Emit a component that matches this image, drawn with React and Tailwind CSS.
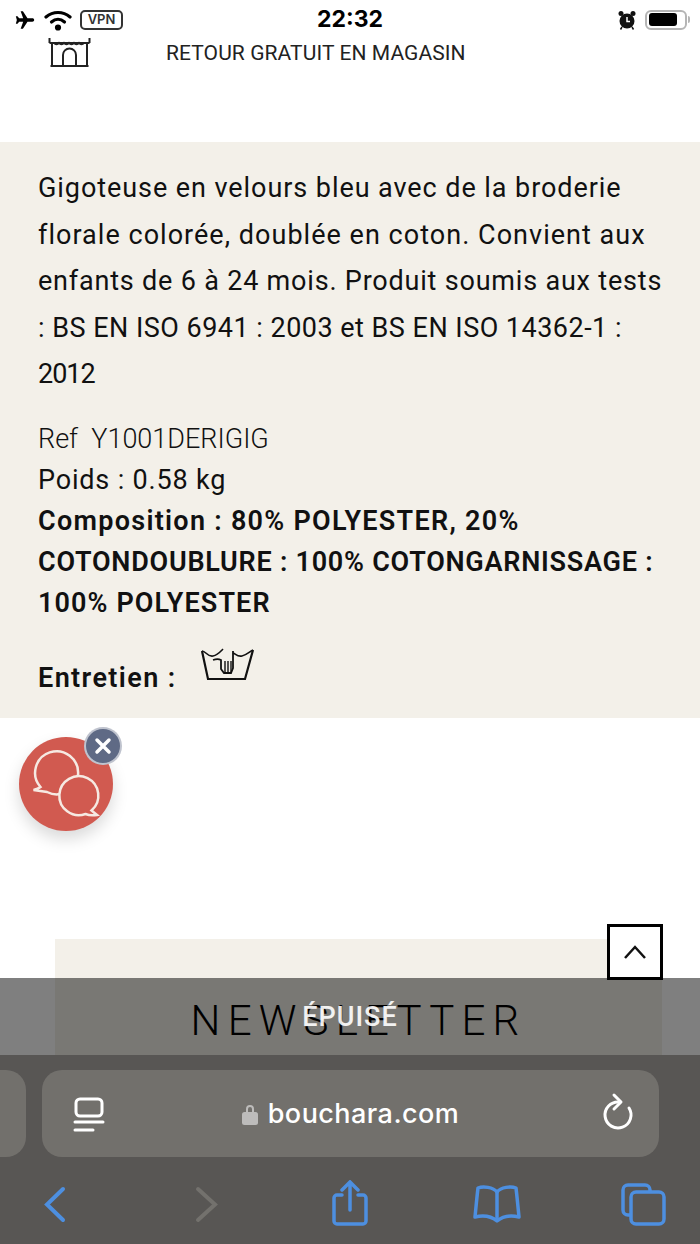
import React from 'react';

function StatusBar() {
  return (
    <div className="h-[34px] pt-[5px] flex items-center justify-between pl-[14px] pr-[10px] font-['Inter',sans-serif] text-black relative">
      <div className="flex items-center gap-[8px]">
        <svg width="22" height="20" viewBox="0 0 24 24" fill="currentColor">
          <path d="M23 12c0-1.200-1-2-2.200-2H15L9.500 1.500H6.800l3 8.500H5L3 7.500H1L2.200 12 1 16.500h2L5 14h4.800l-3 8.500h2.700L15 14h5.800c1.200 0 2.200-.8 2.200-2z" />
        </svg>
        <svg width="28" height="22" viewBox="0 0 28 22" fill="none" stroke="currentColor" strokeWidth="3.200" strokeLinecap="round">
          <path d="M2 8c7-6 17-6 24 0" />
          <path d="M7.500 13c4-3.500 9-3.500 13 0" />
          <circle cx="14" cy="18.500" r="1.500" fill="currentColor" />
        </svg>
        <div className="w-[43px] h-[20px] border-2 border-[#333] rounded-[5px] flex items-center justify-center text-[13px] leading-none font-semibold text-[#333]">VPN</div>
      </div>
      <div className="absolute left-[317px] top-[5px] text-[23px] leading-[28px] font-bold">22:32</div>
      <div className="flex items-center gap-[8px]">
        <svg width="20" height="22" viewBox="0 0 20 22">
          <circle cx="10" cy="12" r="7.500" fill="#111" />
          <circle cx="4" cy="4.500" r="2.500" fill="#111" />
          <circle cx="16" cy="4.500" r="2.500" fill="#111" />
          <path d="M10 8v4.500h3" stroke="#fff" strokeWidth="1.500" fill="none" />
          <path d="M5 18l-1.500 2.500M15 18l1.500 2.500" stroke="#111" strokeWidth="1.500" />
        </svg>
        <div className="flex items-center gap-[1px]">
          <div className="w-[42px] h-[20px] border-2 border-[#b5b5b5] rounded-[6px] p-[1.500px]">
            <div className="w-[28px] h-full bg-black rounded-[3px]" />
          </div>
          <div className="w-[2px] h-[7px] bg-[#b5b5b5] rounded-r" />
        </div>
      </div>
    </div>
  );
}

export default function App() {
  return (
    <div className="w-[700px] h-[1244px] relative overflow-hidden bg-white font-['Roboto',sans-serif]">
      <StatusBar />
      <div className="flex items-start h-[108px] text-[#222]">
        <svg className="ml-[48px] mt-[3px]" width="43" height="31" viewBox="0 0 43 31" fill="none" stroke="#222" strokeWidth="2">
          <path d="M1.500 1v5M41.500 1v5M1.500 6h40" />
          <path d="M6 6a2.800 2.800 0 0 0 5 0a2.800 2.800 0 0 0 5 0a2.800 2.800 0 0 0 5 0a2.800 2.800 0 0 0 5 0a2.800 2.800 0 0 0 5 0a2.800 2.800 0 0 0 5 0" strokeWidth="1.500" />
          <path d="M4 7v22h35V7M2.500 29h38" />
          <path d="M15 29V18a6.500 6.500 0 0 1 13 0v11" />
        </svg>
        <div className="ml-[75px] mt-[6px] text-[21px] leading-[26px] tracking-[0.09px]">RETOUR GRATUIT EN MAGASIN</div>
      </div>

      <div className="h-[576px] bg-[#f3f0e9] px-[38px] pt-[23px] text-[#111]">
        <div className="text-[27px] leading-[46.500px] whitespace-nowrap">
          <div className="tracking-[0.93px]">Gigoteuse en velours bleu avec de la broderie</div>
          <div className="tracking-[1.03px]">florale colorée, doublée en coton. Convient aux</div>
          <div className="tracking-[0.8px]">enfants de 6 à 24 mois. Produit soumis aux tests</div>
          <div className="tracking-[0.48px]">: BS EN ISO 6941 : 2003 et BS EN ISO 14362-1 :</div>
          <div className="tracking-[-1px]">2012</div>
        </div>
        <div className="mt-[21px] text-[27px] leading-[41px] whitespace-nowrap">
          <div className="font-light whitespace-pre">Ref  Y1001DERIGIG</div>
          <div className="tracking-[0.83px]">Poids : 0.58 kg</div>
          <div className="font-semibold tracking-[1.28px]">Composition : 80% POLYESTER, 20%</div>
          <div className="font-semibold tracking-[0.75px]">COTONDOUBLURE : 100% COTONGARNISSAGE :</div>
          <div className="font-semibold tracking-[1.1px]">100% POLYESTER</div>
        </div>
        <div className="mt-[30px] flex items-start">
          <span className="text-[27px] leading-[36px] font-semibold mt-[6px] tracking-[1.4px]">Entretien :</span>
          <svg className="ml-[23px] mt-[-8px]" width="54" height="36" viewBox="0 0 54 36" fill="none" stroke="#111" strokeWidth="2.200">
            <path d="M2 5l6 28h37l8-29" />
            <path d="M2 5c4 0 5 6 11 5 5-1 7-4 10-7M33 7c3 1 4 4 9 3 5-1 7-4 11-6" strokeWidth="1.600" />
            <path d="M13 14c3-1 6-1 8 0v9l3 4h7l2-5V5" strokeWidth="1.800" />
            <path d="M25 15v11M28 15v11M31 15v11" strokeWidth="1.400" />
          </svg>
        </div>
      </div>

      <div className="mt-[221px] ml-[55px] w-[607px] h-[116px] bg-[#f3f0e9] flex items-end justify-center pb-[11px]">
        <div className="text-[42px] leading-[46px] font-light tracking-[7.200px] text-black">NEWSLETTER</div>
      </div>

      {/* floating chat button */}
      <div className="absolute left-[19px] top-[737px] w-[94px] h-[94px] rounded-full bg-[#d15a50] shadow-[0_8px_16px_rgba(0,0,0,0.15)]">
        <svg width="94" height="94" viewBox="0 0 94 94" fill="none" stroke="#f6e9e2" strokeWidth="2.500">
          <path d="M21.500 50A21.500 21.500 0 1 1 28 55L14.500 53Q19 52 21.500 50z" />
          <path d="M66.500 77A19.500 19.500 0 1 1 72.500 73.500L78 78Q71 79 66.500 77z" fill="#d15a50" />
        </svg>
      </div>
      <div className="absolute left-[84px] top-[727px] w-[38px] h-[38px] rounded-full bg-[#5f6a85] border-2 border-white/60 flex items-center justify-center">
        <svg width="20" height="20" viewBox="0 0 20 20" stroke="#fff" strokeWidth="3.500" strokeLinecap="round">
          <path d="M4 4l12 12M16 4L4 16" />
        </svg>
      </div>

      {/* scroll to top */}
      <div className="absolute left-[607px] top-[924px] w-[56px] h-[56px] border-[3px] border-black bg-white flex items-center justify-center z-10">
        <svg width="26" height="16" viewBox="0 0 26 16" fill="none" stroke="#111" strokeWidth="2.500">
          <path d="M3 14L13 3l10 11" />
        </svg>
      </div>

      {/* sold out bar */}
      <div className="absolute left-0 right-0 top-[978px] h-[77px] bg-black/50 flex items-start justify-center pt-[21px] z-20">
        <span className="text-[27px] leading-[36px] text-white/90 font-medium tracking-[1px]">ÉPUISÉ</span>
      </div>

      {/* safari toolbar */}
      <div className="absolute left-0 right-0 bottom-0 h-[189px] bg-[#585654] z-30">
        <div className="absolute left-[-40px] top-[15px] w-[66px] h-[87px] rounded-[20px] bg-[#72706c]" />
        <div className="ml-[42px] mt-[15px] w-[617px] h-[87px] rounded-[20px] bg-[#72706c] relative flex items-center justify-center">
          <svg className="absolute left-[31px] top-[27px]" width="32" height="36" viewBox="0 0 32 36" fill="none" stroke="#fff" strokeWidth="3" strokeLinecap="round">
            <rect x="3" y="2" width="26" height="17" rx="4" />
            <path d="M2 25h28M2 33h18" />
          </svg>
          <svg className="mr-[10px]" width="16" height="22" viewBox="0 0 16 22" fill="#bdbcbb">
            <path d="M4 9V6a4 4 0 0 1 8 0v3h-2V6a2 2 0 0 0-4 0v3z" />
            <rect x="0" y="9" width="16" height="13" rx="2.500" />
          </svg>
          <span className="font-['Inter',sans-serif] text-[27px] leading-[34px] text-white font-medium tracking-[0.45px]">bouchara.com</span>
          <svg className="absolute right-[24px] top-[22px]" width="34" height="42" viewBox="0 0 34 42" fill="none" stroke="#fff" strokeWidth="3" strokeLinecap="round" strokeLinejoin="round">
            <path d="M28 16A13 13 0 1 1 18 10" />
            <path d="M13 3l7 7-7 7" />
          </svg>
        </div>
        <div className="h-[86px]">
          <svg className="absolute left-[42px] bottom-[18px]" width="28" height="44" viewBox="0 0 28 44" fill="none" stroke="#4d8fe0" strokeWidth="4" strokeLinecap="round">
            <path d="M21 7L5 22.500 21 38" />
          </svg>
          <svg className="absolute left-[192px] bottom-[18px]" width="28" height="44" viewBox="0 0 28 44" fill="none" stroke="#73716d" strokeWidth="4" strokeLinecap="round">
            <path d="M6 7l17 15.500L6 38" />
          </svg>
          <svg className="absolute left-[331px] bottom-[18px]" width="38" height="46" viewBox="0 0 38 46" fill="none" stroke="#4d8fe0" strokeWidth="3.500" strokeLinecap="round">
            <path d="M11 15H6a3 3 0 0 0-3 3v23a3 3 0 0 0 3 3h26a3 3 0 0 0 3-3V18a3 3 0 0 0-3-3h-5" />
            <path d="M19 30V3M11 10l8-8 8 8" />
          </svg>
          <svg className="absolute left-[473px] bottom-[21px]" width="48" height="38" viewBox="0 0 48 38" fill="none" stroke="#4d8fe0" strokeWidth="3.500" strokeLinejoin="round">
            <path d="M24 7C20 2 10 1 5 3 4 11 3 22 2 32c8-2 16-1 22 4 6-5 14-6 22-4-1-10-2-21-3-29-5-2-15-1-19 4z" />
            <path d="M24 7v29" />
          </svg>
          <svg className="absolute left-[621px] bottom-[18px]" width="45" height="43" viewBox="0 0 45 43" fill="none" stroke="#4d8fe0" strokeWidth="3.500">
            <path d="M9 32H7a5 5 0 0 1-5-5V7a5 5 0 0 1 5-5h17a5 5 0 0 1 5 5v2" />
            <rect x="10" y="9" width="33" height="32" rx="5" />
          </svg>
        </div>
      </div>
    </div>
  );
}
